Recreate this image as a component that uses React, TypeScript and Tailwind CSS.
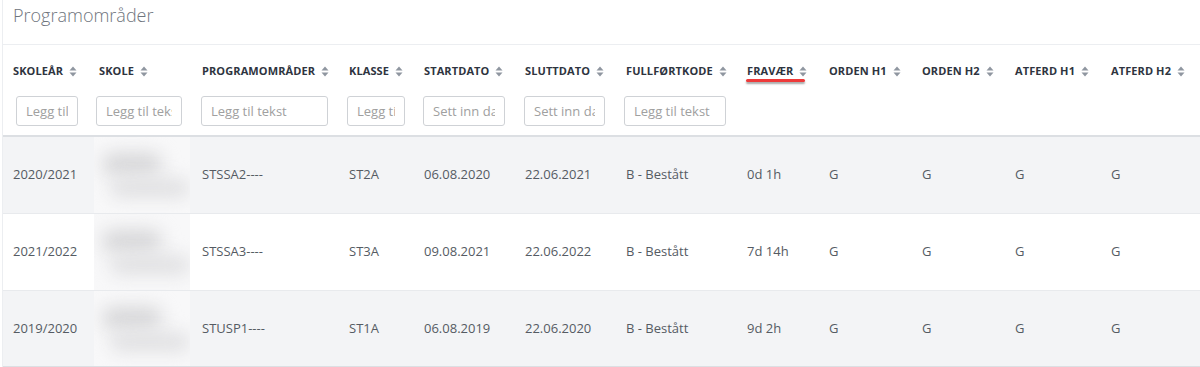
import React from 'react'

type Col = {
  label: string
  width: string
  pad: string
  input?: { placeholder: string; cls: string }
  underline?: boolean
}

const cols: Col[] = [
  { label: 'Skoleår', width: 'w-[84px]', pad: 'pl-[10px]', input: { placeholder: 'Legg til tekst', cls: 'ml-[3px] w-[62px]' } },
  { label: 'Skole', width: 'w-[103px]', pad: 'pl-3', input: { placeholder: 'Legg til tekst', cls: '-ml-[3px] w-[86px]' } },
  { label: 'Programområder', width: 'w-[147px]', pad: 'pl-3', input: { placeholder: 'Legg til tekst', cls: '-ml-[1px] w-[127px]' } },
  { label: 'Klasse', width: 'w-[75px]', pad: 'pl-3', input: { placeholder: 'Legg til tekst', cls: '-ml-[2px] w-[58px]' } },
  { label: 'Startdato', width: 'w-[101px]', pad: 'pl-3', input: { placeholder: 'Sett inn dato', cls: '-ml-[1px] w-[82px]' } },
  { label: 'Sluttdato', width: 'w-[101px]', pad: 'pl-3', input: { placeholder: 'Sett inn dato', cls: '-ml-[1px] w-[81px]' } },
  { label: 'Fullførtkode', width: 'w-[121px]', pad: 'pl-3', input: { placeholder: 'Legg til tekst', cls: '-ml-[2px] w-[102px]' } },
  { label: 'Fravær', width: 'w-[82px]', pad: 'pl-3', underline: true },
  { label: 'Orden H1', width: 'w-[93px]', pad: 'pl-3' },
  { label: 'Orden H2', width: 'w-[93px]', pad: 'pl-3' },
  { label: 'Atferd H1', width: 'w-[96px]', pad: 'pl-3' },
  { label: 'Atferd H2', width: 'w-[101px]', pad: 'pl-3' },
]

const rows = [
  ['2020/2021', '', 'STSSA2----', 'ST2A', '06.08.2020', '22.06.2021', 'B - Bestått', '0d 1h', 'G', 'G', 'G', 'G'],
  ['2021/2022', '', 'STSSA3----', 'ST3A', '09.08.2021', '22.06.2022', 'B - Bestått', '7d 14h', 'G', 'G', 'G', 'G'],
  ['2019/2020', '', 'STUSP1----', 'ST1A', '06.08.2019', '22.06.2020', 'B - Bestått', '9d 2h', 'G', 'G', 'G', 'G'],
]

function SortIcon() {
  return (
    <svg width="8" height="11" viewBox="0 0 8 11" className="ml-[6px] shrink-0">
      <path d="M4 0.5 L7.5 4.5 L0.5 4.5 Z" fill="#8f96a0" />
      <path d="M4 10.5 L7.5 6.5 L0.5 6.5 Z" fill="#8f96a0" />
    </svg>
  )
}

function Blurred() {
  return (
    <div className="ml-[7px] w-[99px] h-full bg-[#f8f8f9] overflow-hidden flex flex-col justify-center gap-1 pl-2">
      <div className="h-[22px] w-[60px] rounded-full bg-[#d6d6d8] blur-[9px]" />
      <div className="h-[18px] w-[80px] ml-2 rounded-full bg-[#dedee0] blur-[9px]" />
    </div>
  )
}

export default function App() {
  return (
    <div className="w-[1200px] bg-white font-['Open_Sans',sans-serif]">
      <div className="ml-[2px] border-l border-[#eceef1]">
        <div className="h-[45px] border-b border-[#eceef1] pl-[10px] pt-[1px]">
          <h2 className="text-[18px] leading-[28px] text-[#6f757d] font-light">Programområder</h2>
        </div>

        <div className="flex h-[92px] border-b-2 border-[#dcdfe3]">
          {cols.map((c) => (
            <div key={c.label} className={`${c.width} ${c.pad} shrink-0 pt-[19px]`}>
              <div className="flex items-center h-[14px]">
                <span className="relative text-[11px] font-bold uppercase tracking-[0.1px] text-[#2e3440] leading-[14px]">
                  {c.label}
                  {c.underline && (
                    <span className="absolute left-[-1px] right-[-12px] top-[15px] h-[3px] rounded-full bg-[#ee3a3a] shadow-[0_2px_2px_rgba(0,0,0,0.35)]" />
                  )}
                </span>
                <SortIcon />
              </div>
              {c.input && (
                <input
                  readOnly
                  placeholder={c.input.placeholder}
                  className={`${c.input.cls} mt-[18px] h-[30px] rounded-[3px] border border-[#cfd2d6] bg-white px-[9px] text-[13px] text-[#333] placeholder:text-[#a0a0a0] outline-none`}
                />
              )}
            </div>
          ))}
        </div>

        {rows.map((r, i) => (
          <div
            key={i}
            className={`flex h-[77px] ${i === 1 ? 'bg-white' : 'bg-[#f3f4f6]'} ${i === rows.length - 1 ? 'border-b-2 border-[#dcdfe3]' : 'border-b border-[#e8eaed]'}`}
          >
            {cols.map((c, j) => (
              <div key={j} className={`${c.width} ${j === 1 ? '' : c.pad} shrink-0 flex items-center text-[13px] text-[#555b63]`}>
                {j === 1 ? <Blurred /> : r[j]}
              </div>
            ))}
          </div>
        ))}
      </div>
    </div>
  )
}
